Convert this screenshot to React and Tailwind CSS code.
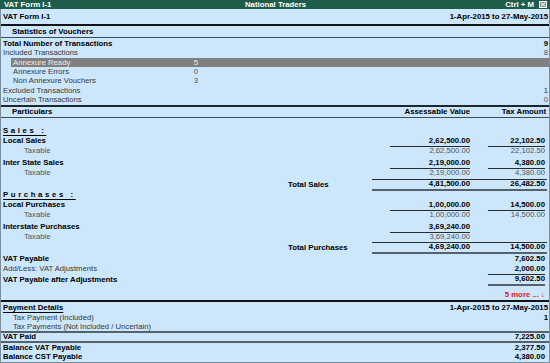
import React from "react";

export default function App() {
  return (
    <div className="w-[550px] h-[363px] overflow-hidden bg-[#cce6fb] font-['Liberation_Sans',Arial,sans-serif] text-[7.7px] leading-none text-[#383838] flex flex-col">
      {/* Title bar */}
      <div className="h-[9px] shrink-0 bg-[#1f5c4a] text-white font-bold text-[7.8px] flex items-center pl-[4px] pr-[3px]">
        <div className="flex-1">VAT Form I-1</div>
        <div>National Traders</div>
        <div className="flex-1 flex justify-end items-center gap-[5px]">
          <span>Ctrl + M</span>
          <svg width="8" height="7" viewBox="0 0 8 7">
            <rect x="0.5" y="0.5" width="7" height="6" fill="#8a9a94" stroke="#ffffff" strokeWidth="1" />
            <path d="M2 1.8 L6 5.2 M6 1.8 L2 5.2" stroke="#ffffff" strokeWidth="1" />
          </svg>
        </div>
      </div>

      <div className="flex-1 flex flex-col border-x border-b border-[#7d8d9b]">
        {/* Form heading */}
        <div className="h-[15px] shrink-0 flex items-center justify-between pl-[2px] pr-[1px] font-bold text-black text-[7.8px]">
          <span>VAT Form I-1</span>
          <span>1-Apr-2015 to 27-May-2015</span>
        </div>
        <div className="h-[2px] shrink-0 bg-[#141414]" />
        <div className="h-[12px] shrink-0 flex items-center pl-[11px] font-bold text-black text-[7.8px] border-b border-[#3e4d5a]">
          Statistics of Vouchers
        </div>
        <div className="h-[1px] shrink-0" />

        {/* Statistics */}
        <div className="h-[9.4px] shrink-0 flex items-center justify-between pl-[2px] pr-[1px] font-bold text-black text-[7.8px]">
          <span>Total Number of Transactions</span>
          <span>9</span>
        </div>
        <div className="h-[9.4px] shrink-0 flex items-center justify-between pl-[2px] pr-[1px]">
          <span>Included Transactions</span>
          <span className="text-[#555]">8</span>
        </div>
        <div className="h-[9.4px] shrink-0 flex pl-[10px]">
          <div className="flex-1 flex items-center pl-[2px] bg-[#808080] text-[#ececec]">
            <span className="w-[178px]">Annexure Ready</span>
            <span className="w-[7px] text-right">5</span>
          </div>
        </div>
        <div className="h-[9.4px] shrink-0 flex items-center pl-[12px]">
          <span className="w-[178px]">Annexure Errors</span>
          <span className="w-[7px] text-right text-[#555]">0</span>
        </div>
        <div className="h-[9.4px] shrink-0 flex items-center pl-[12px]">
          <span className="w-[178px]">Non Annexure Vouchers</span>
          <span className="w-[7px] text-right text-[#555]">3</span>
        </div>
        <div className="h-[9.4px] shrink-0 flex items-center justify-between pl-[2px] pr-[1px]">
          <span>Excluded Transactions</span>
          <span className="text-[#333]">1</span>
        </div>
        <div className="h-[9.4px] shrink-0 flex items-center justify-between pl-[2px] pr-[1px]">
          <span>Uncertain Transactions</span>
          <span className="text-[#555]">0</span>
        </div>

        <div className="h-[2px] shrink-0 bg-[#1e2730]" />
        {/* Particulars header */}
        <div className="h-[11px] shrink-0 flex items-center pr-[3px] font-bold text-black text-[7.8px] border-b border-[#3e4d5a]">
          <div className="flex-1 pl-[11px]">Particulars</div>
          <div className="w-[98px] text-right">Assessable Value</div>
          <div className="w-[18px]" />
          <div className="w-[58px] text-right">Tax Amount</div>
        </div>
        <div className="h-[8px] shrink-0" />

        {/* Sales */}
        <div className="h-[10px] shrink-0 flex items-center pl-[2px] font-bold text-black text-[7.8px]">
          <span className="tracking-[2.6px] underline decoration-1 underline-offset-[1.5px]">Sales :</span>
        </div>
        <div className="h-[10px] shrink-0 flex items-center pr-[4px] font-bold text-black text-[7.8px]">
          <div className="flex-1 pl-[2px]">Local Sales</div>
          <div className="w-[98px] text-right">2,62,500.00</div>
          <div className="w-[18px]" />
          <div className="w-[57px] text-right">22,102.50</div>
        </div>
        <div className="h-[10px] shrink-0 flex pr-[4px] text-[#555]">
          <div className="flex-1 pl-[23px] flex items-center">Taxable</div>
          <div className="w-[98px] flex justify-end">
            <div className="w-[80px] border-t border-[#2a2a2a] flex items-center justify-end">2,62,500.00</div>
          </div>
          <div className="w-[18px]" />
          <div className="w-[57px] border-t border-[#2a2a2a] flex items-center justify-end">22,102.50</div>
        </div>
        <div className="h-[2px] shrink-0" />
        <div className="h-[10px] shrink-0 flex items-center pr-[4px] font-bold text-black text-[7.8px]">
          <div className="flex-1 pl-[2px]">Inter State Sales</div>
          <div className="w-[98px] text-right">2,19,000.00</div>
          <div className="w-[18px]" />
          <div className="w-[57px] text-right">4,380.00</div>
        </div>
        <div className="h-[10px] shrink-0 flex pr-[4px] text-[#555]">
          <div className="flex-1 pl-[23px] flex items-center">Taxable</div>
          <div className="w-[98px] flex justify-end">
            <div className="w-[80px] border-t border-[#2a2a2a] flex items-center justify-end">2,19,000.00</div>
          </div>
          <div className="w-[18px]" />
          <div className="w-[57px] border-t border-[#2a2a2a] flex items-center justify-end">4,380.00</div>
        </div>
        <div className="h-[1px] shrink-0" />
        <div className="h-[12px] shrink-0 flex pr-[2px] font-bold text-black text-[7.8px]">
          <div className="flex-1 pl-[287px] flex items-center">Total Sales</div>
          <div className="w-[175px] flex items-center border-t border-b-2 border-t-[#2a2a2a] border-b-[#55616c]">
            <div className="w-[98px] text-right">4,81,500.00</div>
            <div className="w-[18px]" />
            <div className="w-[57px] text-right">26,482.50</div>
          </div>
        </div>

        {/* Purchases */}
        <div className="h-[9px] shrink-0 flex items-center pl-[2px] font-bold text-black text-[7.8px]">
          <span className="tracking-[2.6px] underline decoration-1 underline-offset-[1.5px]">Purchases :</span>
        </div>
        <div className="h-[10px] shrink-0 flex items-center pr-[4px] font-bold text-black text-[7.8px]">
          <div className="flex-1 pl-[2px]">Local Purchases</div>
          <div className="w-[98px] text-right">1,00,000.00</div>
          <div className="w-[18px]" />
          <div className="w-[57px] text-right">14,500.00</div>
        </div>
        <div className="h-[10px] shrink-0 flex pr-[4px] text-[#555]">
          <div className="flex-1 pl-[23px] flex items-center">Taxable</div>
          <div className="w-[98px] flex justify-end">
            <div className="w-[80px] border-t border-[#2a2a2a] flex items-center justify-end">1,00,000.00</div>
          </div>
          <div className="w-[18px]" />
          <div className="w-[57px] border-t border-[#2a2a2a] flex items-center justify-end">14,500.00</div>
        </div>
        <div className="h-[2px] shrink-0" />
        <div className="h-[10px] shrink-0 flex items-center pr-[4px] font-bold text-black text-[7.8px]">
          <div className="flex-1 pl-[2px]">Interstate Purchases</div>
          <div className="w-[98px] text-right">3,69,240.00</div>
          <div className="w-[18px]" />
          <div className="w-[57px]" />
        </div>
        <div className="h-[10px] shrink-0 flex pr-[4px] text-[#555]">
          <div className="flex-1 pl-[23px] flex items-center">Taxable</div>
          <div className="w-[98px] flex justify-end">
            <div className="w-[80px] border-t border-[#2a2a2a] flex items-center justify-end">3,69,240.00</div>
          </div>
          <div className="w-[18px]" />
          <div className="w-[57px]" />
        </div>
        <div className="h-[12px] shrink-0 flex pr-[2px] font-bold text-black text-[7.8px]">
          <div className="flex-1 pl-[287px] flex items-center">Total Purchases</div>
          <div className="w-[175px] flex items-center border-t border-b-2 border-t-[#2a2a2a] border-b-[#55616c]">
            <div className="w-[98px] text-right">4,69,240.00</div>
            <div className="w-[18px]" />
            <div className="w-[57px] text-right">14,500.00</div>
          </div>
        </div>

        {/* VAT payable */}
        <div className="h-[10px] shrink-0 flex items-center pr-[4px] font-bold text-black text-[7.8px]">
          <div className="flex-1 pl-[2px]">VAT Payable</div>
          <div className="w-[57px] text-right">7,602.50</div>
        </div>
        <div className="h-[10px] shrink-0 flex items-center pr-[4px]">
          <div className="flex-1 pl-[2px]">Add/Less: VAT Adjustments</div>
          <div className="w-[57px] text-right font-bold text-black text-[7.8px]">2,000.00</div>
        </div>
        <div className="h-[12px] shrink-0 flex pr-[4px] font-bold text-black text-[7.8px]">
          <div className="flex-1 pl-[2px] flex items-center">VAT Payable after Adjustments</div>
          <div className="w-[57px] border-t border-b-2 border-t-[#2a2a2a] border-b-[#55616c] flex items-center justify-end">9,602.50</div>
        </div>
        <div className="h-[5px] shrink-0" />
        <div className="h-[9px] shrink-0 flex items-center justify-end pr-[4px] font-bold text-[#ee1111] text-[7.8px]">
          5 more ... ↓
        </div>
        <div className="h-[2px] shrink-0 bg-[#141414]" />
        <div className="h-[1px] shrink-0" />

        {/* Payment */}
        <div className="h-[10px] shrink-0 flex items-center justify-between pl-[2px] pr-[1px] font-bold text-black text-[7.8px]">
          <span className="underline decoration-1 underline-offset-[1.5px]">Payment Details</span>
          <span>1-Apr-2015 to 27-May-2015</span>
        </div>
        <div className="h-[10px] shrink-0 flex items-center justify-between pl-[12px] pr-[1px]">
          <span>Tax Payment (Included)</span>
          <span className="font-bold text-black text-[7.8px]">1</span>
        </div>
        <div className="h-[8px] shrink-0 flex items-center pl-[12px]">
          Tax Payments (Not Included / Uncertain)
        </div>
        <div className="h-[2px] shrink-0 bg-[#55616c]" />
        <div className="h-[8px] shrink-0 flex items-center justify-between pl-[2px] pr-[4px] font-bold text-black text-[7.8px]">
          <span>VAT Paid</span>
          <span>7,225.00</span>
        </div>
        <div className="h-[2px] shrink-0 bg-[#55616c]" />
        <div className="h-[10px] shrink-0 flex items-center justify-between pl-[2px] pr-[4px] font-bold text-black text-[7.8px]">
          <span>Balance VAT Payable</span>
          <span>2,377.50</span>
        </div>
        <div className="flex-1 flex items-center justify-between pl-[2px] pr-[4px] font-bold text-black text-[7.8px]">
          <span>Balance CST Payable</span>
          <span>4,380.00</span>
        </div>
      </div>
    </div>
  );
}
